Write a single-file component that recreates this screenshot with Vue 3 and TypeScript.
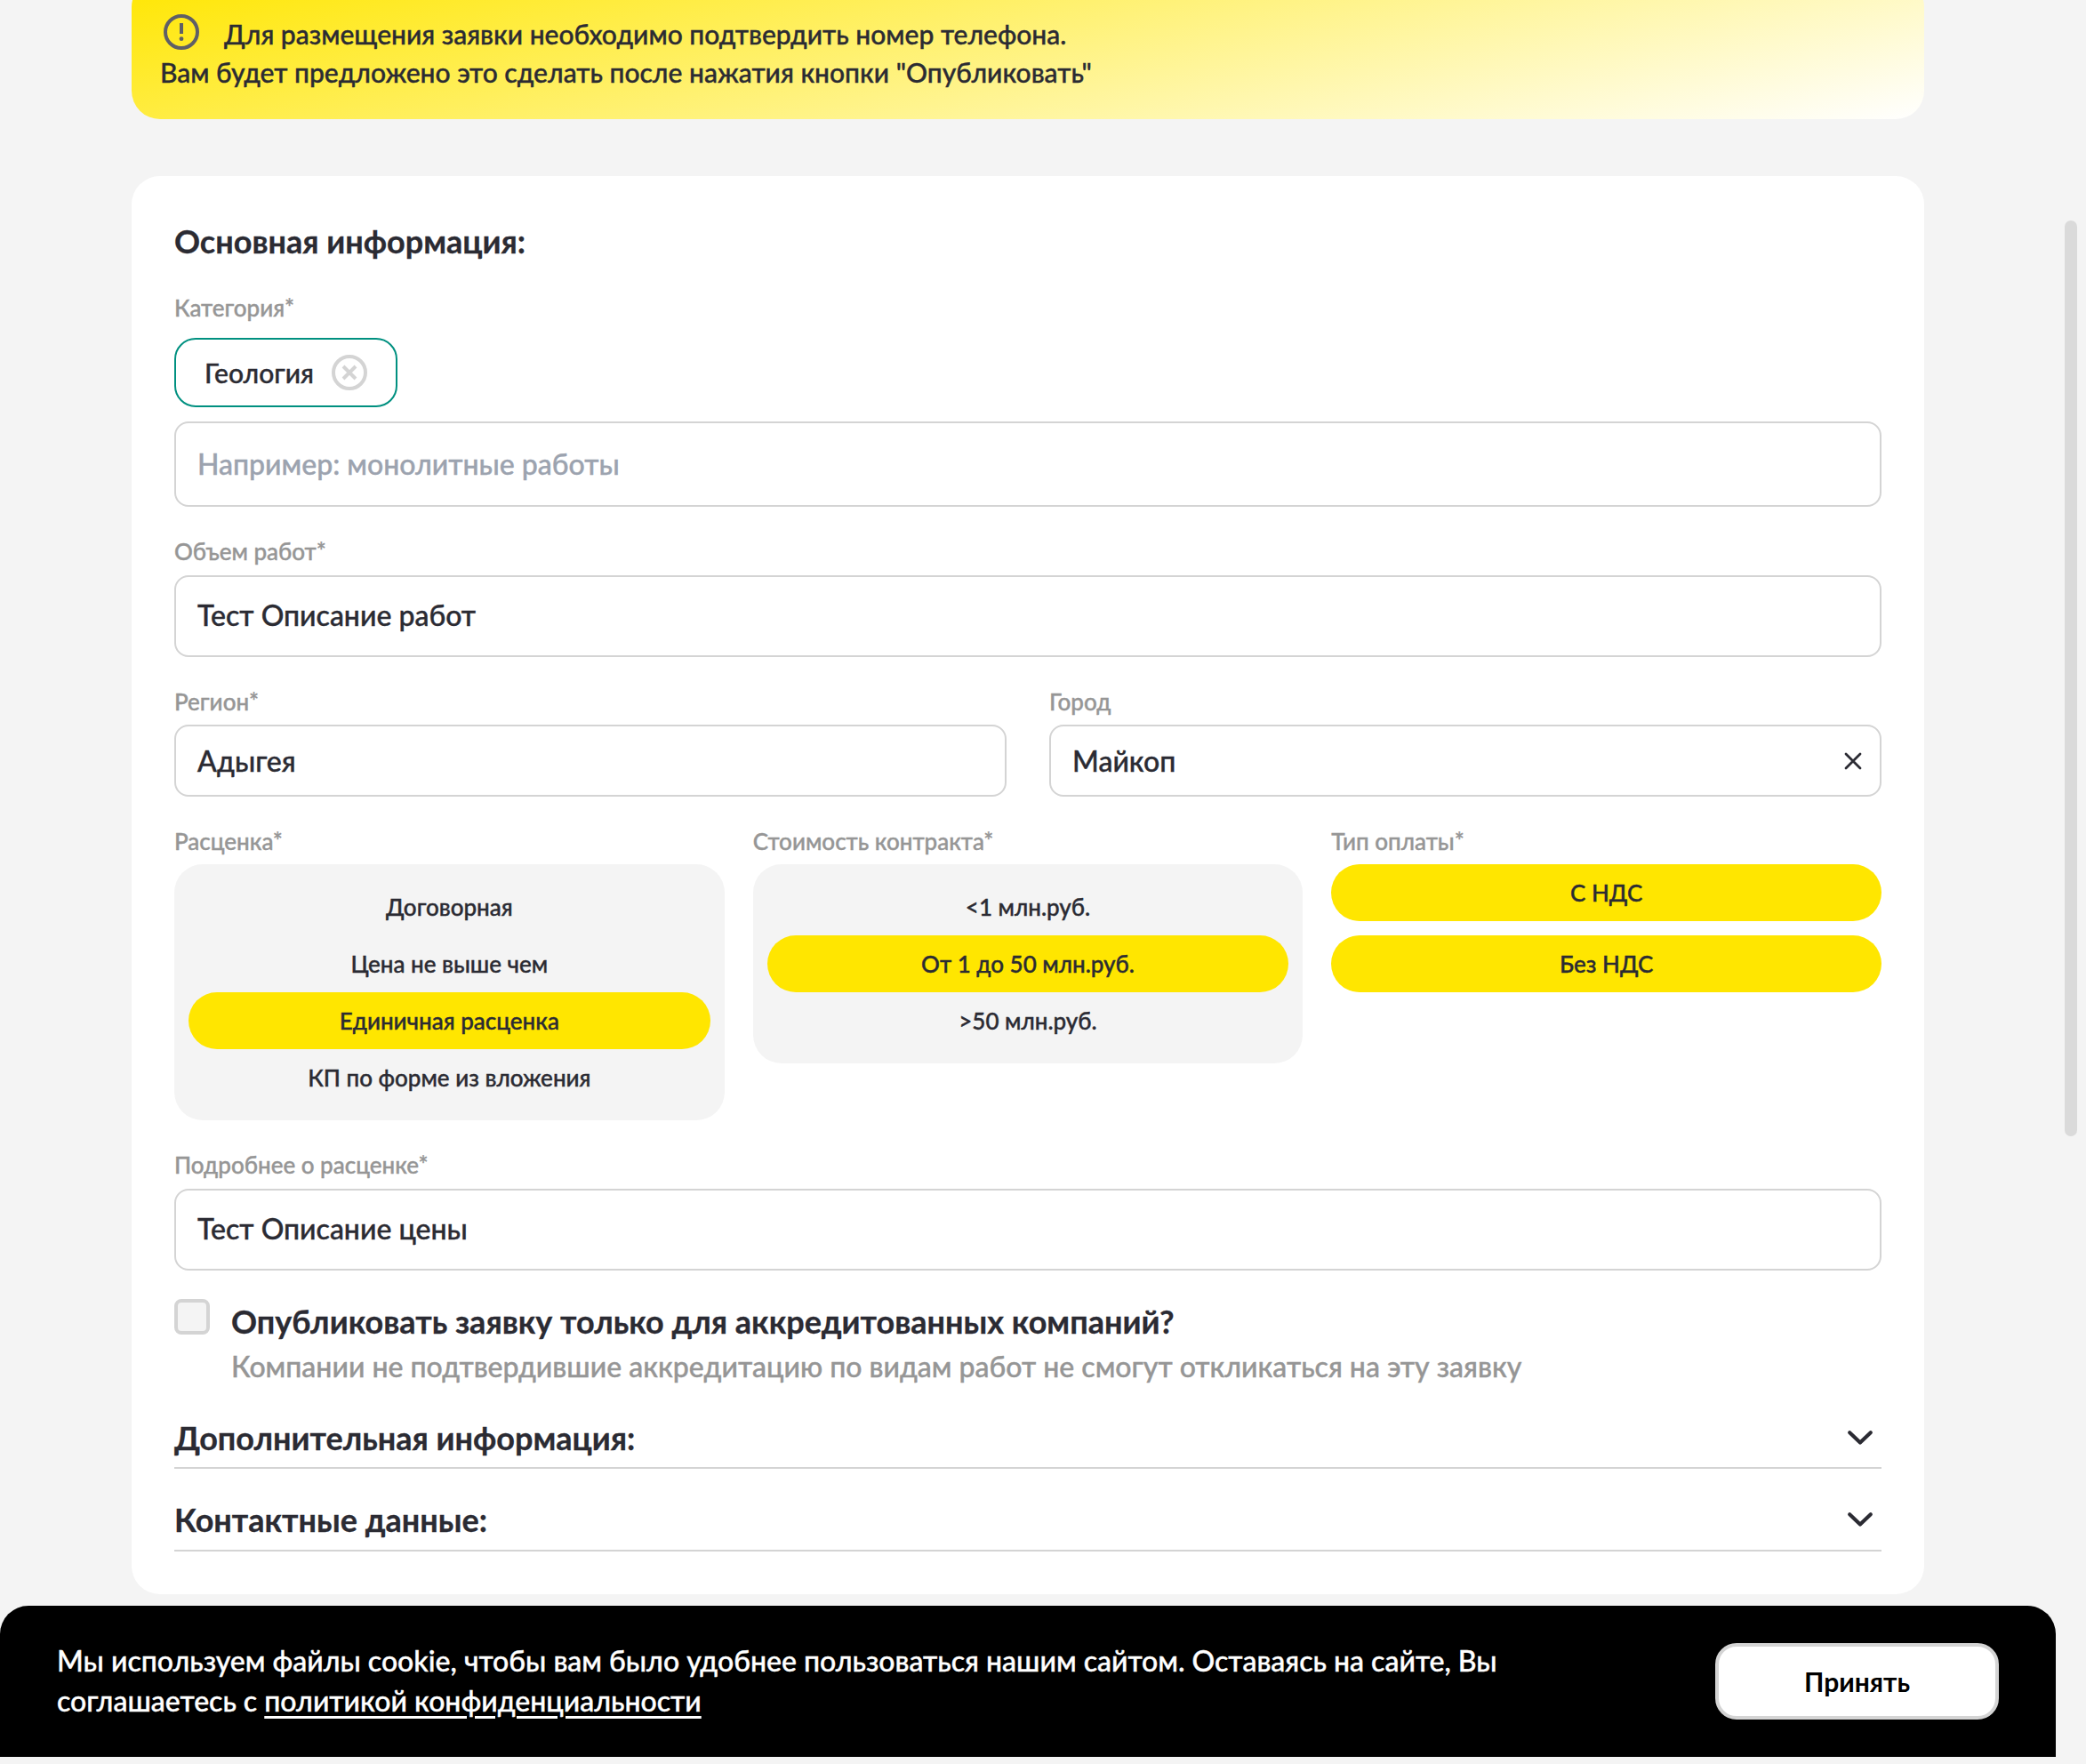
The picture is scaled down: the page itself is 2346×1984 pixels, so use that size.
<script setup lang="ts">
import { ref } from 'vue'

interface Section {
  title: string
  key: string
}

const rates: string[] = ['Договорная', 'Цена не выше чем', 'Единичная расценка', 'КП по форме из вложения']
const costs: string[] = ['<1 млн.руб.', 'От 1 до 50 млн.руб.', '>50 млн.руб.']
const payments: string[] = ['С НДС', 'Без НДС']
const sections: Section[] = [
  { title: 'Дополнительная информация:', key: 'extra' },
  { title: 'Контактные данные:', key: 'contacts' },
]

const rate = ref<string>('Единичная расценка')
const cost = ref<string>('От 1 до 50 млн.руб.')
</script>

<template>
  <div class="page">
    <main class="content">
      <div class="notice">
        <p class="notice-first">
          <svg class="notice-icon" viewBox="0 0 40 40" fill="none">
            <circle cx="20" cy="20" r="18" stroke="currentColor" stroke-width="4" />
            <path d="M20 10v12" stroke="currentColor" stroke-width="4" />
            <circle cx="20" cy="27.7" r="2.4" fill="currentColor" />
          </svg>
          <span>Для размещения заявки необходимо подтвердить номер телефона.</span>
        </p>
        <p>Вам будет предложено это сделать после нажатия кнопки "Опубликовать"</p>
      </div>

      <section class="card">
        <h2 class="title">Основная информация:</h2>

        <div class="field first">
          <div class="label">Категория*</div>
          <div class="chip">
            <span>Геология</span>
            <svg class="chip-close" viewBox="0 0 40 40" fill="none" stroke="currentColor" stroke-width="4">
              <circle cx="20" cy="20" r="18" />
              <path d="M13 13l14 14M27 13L13 27" />
            </svg>
          </div>
          <div class="input large placeholder">Например: монолитные работы</div>
        </div>

        <div class="field gap11">
          <div class="label">Объем работ*</div>
          <div class="input medium">Тест Описание работ</div>
        </div>

        <div class="row two">
          <div class="field">
            <div class="label">Регион*</div>
            <div class="input small">Адыгея</div>
          </div>
          <div class="field">
            <div class="label">Город</div>
            <div class="input small">
              <span>Майкоп</span>
              <svg class="clear" viewBox="0 0 24 24" fill="none" stroke="currentColor" stroke-width="2.8" stroke-linecap="round">
                <path d="M4 4l16 16M20 4L4 20" />
              </svg>
            </div>
          </div>
        </div>

        <div class="row three">
          <div class="field">
            <div class="label">Расценка*</div>
            <div class="group">
              <div v-for="r in rates" :key="r" class="option" :class="{ active: r === rate }" @click="rate = r">{{ r }}</div>
            </div>
          </div>
          <div class="field">
            <div class="label">Стоимость контракта*</div>
            <div class="group">
              <div v-for="c in costs" :key="c" class="option" :class="{ active: c === cost }" @click="cost = c">{{ c }}</div>
            </div>
          </div>
          <div class="field">
            <div class="label">Тип оплаты*</div>
            <div class="pills">
              <div v-for="p in payments" :key="p" class="option active">{{ p }}</div>
            </div>
          </div>
        </div>

        <div class="field gap11">
          <div class="label">Подробнее о расценке*</div>
          <div class="input medium">Тест Описание цены</div>
        </div>

        <div class="check-row">
          <span class="box"></span>
          <div>
            <div class="check-title">Опубликовать заявку только для аккредитованных компаний?</div>
            <div class="check-desc">Компании не подтвердившие аккредитацию по видам работ не смогут откликаться на эту заявку</div>
          </div>
        </div>

        <div v-for="s in sections" :key="s.key" class="accordion" :class="s.key">
          <h2 class="title">{{ s.title }}</h2>
          <svg class="chevron" viewBox="0 0 32 20" fill="none" stroke="currentColor" stroke-width="4.2" stroke-linecap="round" stroke-linejoin="round">
            <path d="M4.2 4.2L16 15.6L27.8 4.2" />
          </svg>
        </div>
      </section>
    </main>

    <div class="scrollbar"></div>

    <footer class="cookie">
      <p>Мы используем файлы cookie, чтобы вам было удобнее пользоваться нашим сайтом. Оставаясь на сайте, Вы<br />соглашаетесь с <a>политикой конфиденциальности</a></p>
      <button type="button">Принять</button>
    </footer>
  </div>
</template>

<style>
html,
body {
  margin: 0;
  background: #f4f4f4;
  overflow: hidden;
}
</style>

<style scoped>
.page {
  position: relative;
  box-sizing: border-box;
  width: 2346px;
  height: 1984px;
  overflow: hidden;
  background: #f4f4f4;
  color: #2b2b33;
  font-family: Lato, "Open Sans", sans-serif;
  font-weight: 500;
  -webkit-text-stroke: 0.4px currentColor;
}
.page * {
  box-sizing: border-box;
}
p,
h2 {
  margin: 0;
}
.content {
  width: 2016px;
  margin-left: 148px;
}
.notice {
  height: 158px;
  margin-top: -24px;
  padding: 41px 32px 0;
  border-radius: 32px;
  background: linear-gradient(167deg, #ffe600, #fff);
  font-size: 30px;
  line-height: 43px;
}
.notice p {
  height: 43px;
  white-space: nowrap;
}
.notice-first {
  display: flex;
}
.notice-icon {
  width: 40px;
  height: 40px;
  margin: -1px 28px 0 4px;
  color: #5f5f66;
}
.card {
  margin-top: 64px;
  height: 1595px;
  padding: 48px;
  border-radius: 32px;
  background: #fff;
}
.title {
  font-size: 36px;
  line-height: 50px;
  font-weight: 700;
}
.field {
  margin-top: 34px;
}
.label {
  margin-bottom: 10px;
  font-size: 26px;
  line-height: 32px;
  color: #969696;
}
.first .label {
  margin-bottom: 18px;
}
.gap11 .label {
  margin-bottom: 11px;
}
.chip {
  display: flex;
  align-items: center;
  justify-content: space-between;
  width: 251px;
  height: 78px;
  margin-bottom: 16px;
  padding: 0 32px;
  border: 2px solid #009080;
  border-radius: 24px;
  font-size: 30px;
}
.chip-close {
  width: 40px;
  height: 40px;
  color: #d4d4d4;
}
.input {
  display: flex;
  align-items: center;
  justify-content: space-between;
  padding: 0 18px 0 24px;
  border: 2px solid #d4d4d4;
  border-radius: 16px;
  font-size: 32px;
}
.large {
  height: 96px;
  padding-bottom: 2px;
}
.medium {
  height: 92px;
  padding-bottom: 3px;
}
.small {
  height: 81px;
}
.placeholder {
  color: #9ca3af;
}
.clear {
  width: 24px;
  height: 24px;
}
.row {
  display: grid;
}
.two {
  grid-template-columns: repeat(2, 1fr);
  gap: 48px;
}
.three {
  grid-template-columns: repeat(3, 1fr);
  gap: 32px;
  align-items: start;
}
.group {
  padding: 16px;
  border-radius: 32px;
  background: #f4f4f4;
}
.pills {
  display: flex;
  flex-direction: column;
  gap: 16px;
}
.option {
  height: 64px;
  border-radius: 32px;
  font-size: 26px;
  line-height: 64px;
  text-align: center;
}
.active {
  background: #ffe600;
}
.check-row {
  display: flex;
  gap: 24px;
  margin-top: 32px;
}
.box {
  width: 40px;
  height: 40px;
  border: 4px solid #d4d4d4;
  border-radius: 8px;
  background: #f4f4f4;
}
.check-title {
  font-size: 36px;
  line-height: 50px;
  font-weight: 700;
  white-space: nowrap;
}
.check-desc {
  margin-top: 2px;
  font-size: 32px;
  line-height: 47px;
  color: #969696;
  white-space: nowrap;
}
.title,
.check-title {
  -webkit-text-stroke-width: 0.3px;
}
.accordion {
  display: flex;
  justify-content: space-between;
  height: 60px;
  margin-top: 32px;
  border-bottom: 2px solid #d4d4d4;
}
.contacts {
  height: 61px;
}
.chevron {
  width: 32px;
  height: 20px;
  margin: 15px 8px 0 0;
}
.scrollbar {
  position: absolute;
  top: 248px;
  left: 2322px;
  width: 14px;
  height: 1030px;
  border-radius: 7px;
  background: #dadada;
}
.cookie {
  position: absolute;
  left: 0;
  top: 1806px;
  display: flex;
  align-items: center;
  justify-content: space-between;
  width: 2312px;
  height: 170px;
  padding: 0 64px;
  border-radius: 32px 32px 0 0;
  background: #000;
  color: #fff;
  font-size: 32px;
  line-height: 45px;
}
.cookie p {
  padding-bottom: 2px;
  white-space: nowrap;
}
.cookie a {
  text-decoration: underline;
  text-decoration-thickness: 3px;
  text-underline-offset: 5px;
}
.cookie button {
  width: 319px;
  height: 86px;
  padding: 0;
  border: 4px solid #d4d4d4;
  border-radius: 24px;
  background: #fff;
  color: #000;
  font-family: inherit;
  font-size: 30px;
  font-weight: 700;
  -webkit-text-stroke: 0;
}
</style>
